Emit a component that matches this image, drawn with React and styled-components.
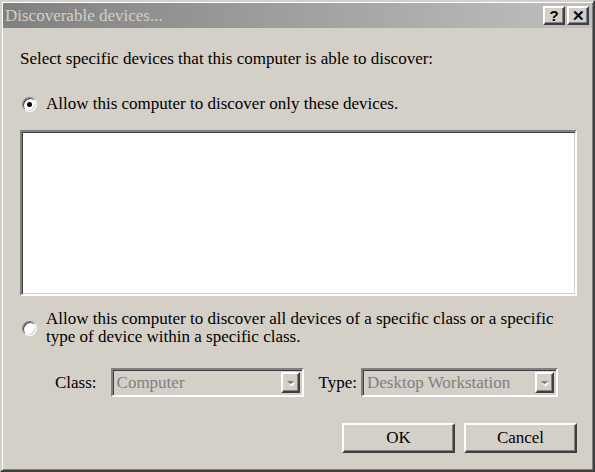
import React from "react";
import styled, { createGlobalStyle, css } from "styled-components";

const GlobalStyle = createGlobalStyle`
  html, body {
    margin: 0;
    padding: 0;
    background: #d4d0c8;
  }
  * {
    box-sizing: border-box;
  }
`;

const raised = css`
  border-style: solid;
  border-width: 2px;
  border-color: #ffffff #404040 #404040 #ffffff;
  box-shadow: inset -1px -1px 0 #808080, inset 1px 1px 0 #d4d0c8;
`;

const sunken = css`
  border-style: solid;
  border-width: 2px;
  border-color: #808080 #ffffff #ffffff #808080;
  box-shadow: inset 1px 1px 0 #404040, inset -1px -1px 0 #d4d0c8;
`;

const Window = styled.div`
  width: 595px;
  height: 472px;
  background: #d4d0c8;
  border-style: solid;
  border-width: 2px;
  border-color: #d4d0c8 #404040 #404040 #d4d0c8;
  box-shadow: inset 1px 1px 0 #ffffff, inset -1px -1px 0 #808080;
  padding: 1px 1px 0 1px;
  display: flex;
  flex-direction: column;
  font-family: "Liberation Serif", "Times New Roman", serif;
  font-size: 17px;
  color: #000;
`;

const TitleBar = styled.div`
  height: 25px;
  background: linear-gradient(to right, #808080, #c0c0c0);
  display: flex;
  align-items: center;
  padding: 0 3px 0 2px;
`;

const Title = styled.div`
  flex: 1;
  color: #d4d0c8;
  font-size: 17px;
  line-height: 20px;
`;

const TitleButtons = styled.div`
  display: flex;
  gap: 2px;
`;

const TitleButton = styled.div`
  ${raised};
  width: 22px;
  height: 19px;
  background: #d4d0c8;
  display: flex;
  align-items: center;
  justify-content: center;
  font-family: "Liberation Sans", Arial, sans-serif;
  font-weight: bold;
  font-size: 15px;
  line-height: 1;
  color: #000;
`;

const Content = styled.div`
  display: flex;
  flex-direction: column;
  padding: 22px 15px 0 17px;
`;

const Prompt = styled.div`
  line-height: 18px;
`;

const RadioRow = styled.div`
  display: flex;
  align-items: center;
  margin-top: ${(p) => p.$top}px;
  line-height: 18px;
`;

const RadioCircle = styled.span`
  width: 15px;
  height: 15px;
  flex: none;
  margin: 0 9px 0 2px;
  border-radius: 50%;
  background: #ffffff;
  border: 1px solid;
  border-color: #808080 #ffffff #ffffff #808080;
  box-shadow: inset 1px 1px 0 #404040, inset -1px -1px 0 #d4d0c8;
  display: flex;
  align-items: center;
  justify-content: center;

  &::after {
    content: "";
    width: 5px;
    height: 5px;
    border-radius: 50%;
    background: ${(p) => (p.$checked ? "#000" : "transparent")};
  }
`;

const ListBox = styled.div`
  ${sunken};
  margin-top: 17px;
  height: 166px;
  background: #ffffff;
`;

const FieldRow = styled.div`
  display: flex;
  align-items: center;
  margin-top: 22px;
  padding-left: 35px;
`;

const Label = styled.span`
  flex: none;
  margin-right: ${(p) => p.$gap}px;
  line-height: 18px;
`;

const Combo = styled.div`
  ${sunken};
  flex: none;
  width: ${(p) => p.$w}px;
  height: 29px;
  background: #d4d0c8;
  display: flex;
  align-items: center;
  padding: 2px 2px 2px 4px;
  margin-right: ${(p) => p.$mr || 0}px;
`;

const ComboText = styled.span`
  flex: 1;
  color: #808080;
  line-height: 18px;
  white-space: nowrap;
  overflow: hidden;
`;

const DropButton = styled.span`
  ${raised};
  width: 19px;
  height: 21px;
  flex: none;
  background: #d4d0c8;
  display: flex;
  align-items: center;
  justify-content: center;
`;

const ButtonRow = styled.div`
  display: flex;
  justify-content: flex-end;
  gap: 9px;
  margin-top: 26px;
`;

const PushButton = styled.div`
  ${raised};
  width: 113px;
  height: 30px;
  background: #d4d0c8;
  display: flex;
  align-items: center;
  justify-content: center;
  line-height: 18px;
`;

const Arrow = () => (
  <svg width="9" height="6" viewBox="0 0 9 6">
    <polygon points="1,2 8,2 4.5,5.5" fill="#ffffff" transform="translate(1 1)" />
    <polygon points="1,1 8,1 4.5,4.5" fill="#808080" />
  </svg>
);

export default function App() {
  return (
    <>
      <GlobalStyle />
      <Window>
        <TitleBar>
          <Title>Discoverable devices...</Title>
          <TitleButtons>
            <TitleButton>?</TitleButton>
            <TitleButton>✕</TitleButton>
          </TitleButtons>
        </TitleBar>
        <Content>
          <Prompt>Select specific devices that this computer is able to discover:</Prompt>
          <RadioRow $top={27}>
            <RadioCircle $checked />
            <span>Allow this computer to discover only these devices.</span>
          </RadioRow>
          <ListBox />
          <RadioRow $top={14}>
            <RadioCircle />
            <span>
              Allow this computer to discover all devices of a specific class or a specific
              <br />
              type of device within a specific class.
            </span>
          </RadioRow>
          <FieldRow>
            <Label $gap={14}>Class:</Label>
            <Combo $w={193} $mr={15}>
              <ComboText>Computer</ComboText>
              <DropButton>
                <Arrow />
              </DropButton>
            </Combo>
            <Label $gap={4}>Type:</Label>
            <Combo $w={197}>
              <ComboText>Desktop Workstation</ComboText>
              <DropButton>
                <Arrow />
              </DropButton>
            </Combo>
          </FieldRow>
          <ButtonRow>
            <PushButton>OK</PushButton>
            <PushButton>Cancel</PushButton>
          </ButtonRow>
        </Content>
      </Window>
    </>
  );
}
